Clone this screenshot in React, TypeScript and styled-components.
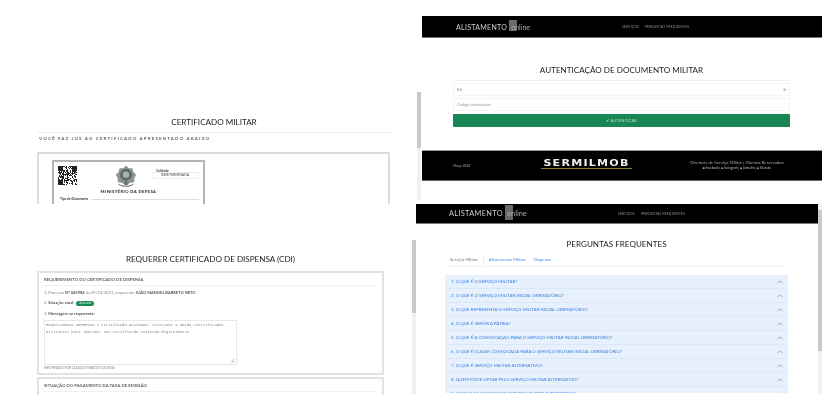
import React from 'react';
import styled, { createGlobalStyle } from 'styled-components';

const GlobalStyle = createGlobalStyle`
	html, body {
		margin: 0;
		padding: 0;
		background: #fff;
		font-family: 'Lato', 'Open Sans', sans-serif;
		overflow: hidden;
	}
`;

const Collage = styled.div`
	display: flex;
	width: 839px;
	height: 407px;
	overflow: hidden;
	background: #fff;
	filter: blur(0.55px);
`;

const LeftColumn = styled.div`
	display: flex;
	flex-direction: column;
	width: 416px;
	flex: none;
`;

const RightColumn = styled.div`
	display: flex;
	flex-direction: column;
	width: 406px;
	flex: none;
`;

const Title = styled.h1`
	margin: 0;
	text-align: center;
	font-size: 8.1px;
	line-height: 12px;
	font-weight: 400;
	color: #222;
`;

/* top left: certificate */
const CertificateShot = styled.section`
	height: 204px;
	padding: 116px 26px 0 37px;
	box-sizing: border-box;
	overflow: hidden;
`;

const CertHeader = styled.div`
	border-bottom: 1px solid #eee;
	padding-bottom: 4px;
	margin-right: -1px;
`;

const Lead = styled.p`
	margin: 3px 0 10px 2px;
	font-size: 4.5px;
	line-height: 6px;
	letter-spacing: 1.12px;
	font-weight: 700;
	color: #666;
`;

const CertCard = styled.div`
	height: 80px;
	width: 353px;
	box-sizing: border-box;
	border: 2px solid #dcdcdc;
	border-bottom: 0;
	padding: 6px 0 0 13px;
`;

const DocSheet = styled.div`
	width: 153px;
	height: 60px;
	box-sizing: border-box;
	border: 2px solid #b4b4b4;
	border-bottom: 0;
	padding: 4px 4px 0;
`;

const DocTop = styled.div`
	display: grid;
	grid-template-columns: 19px 1fr 46px;
	align-items: start;
	height: 22px;
`;

const Emblem = styled.svg`
	display: block;
	margin: -2px 0 0 38px;
`;

const ValidityBox = styled.div`
	margin: 3px 0 0 -1px;
	font-size: 3.4px;
	line-height: 4px;
	color: #444;
`;

const ValidityLabel = styled.div`
	font-weight: 700;
	padding-left: 4px;
	margin-bottom: -1px;
`;

const ValidityValue = styled.div`
	border: 1px solid #eee;
	padding: 0 2px 0 8px;
	height: 5px;
	white-space: nowrap;
`;

const Ministry = styled.div`
	text-align: center;
	font-size: 4.2px;
	line-height: 5px;
	font-weight: 900;
	letter-spacing: 0.4px;
	color: #333;
	margin-top: 1px;
	padding-left: 0;
`;

const DocField = styled.div`
	display: flex;
	align-items: center;
	gap: 3px;
	font-size: 3.2px;
	line-height: 4px;
	font-weight: 700;
	color: #333;
	margin: 3px 0 0 2px;

	&::after {
		content: '';
		flex: 1;
		border-top: 1px solid #ddd;
	}
`;

/* bottom left: dispensation */
const DispensaShot = styled.section`
	flex: 1;
	display: flex;
	min-height: 0;
`;

const DispensaBody = styled.div`
	width: 347px;
	margin-left: 37px;
	padding-top: 49px;
	overflow: hidden;
	height: 142px;
	flex: none;
`;

const Panel = styled.div`
	border: 2px solid #e2e2e2;
	border-radius: 1px;
	padding: 0 5px;
	margin-top: 6px;
	height: 104px;
	box-sizing: border-box;
`;

const PanelHeading = styled.div`
	height: 12px;
	display: flex;
	align-items: center;
	border-bottom: 1px solid #f0f0f0;
	font-size: 4.3px;
	font-weight: 700;
	color: #666;
	margin-bottom: 2px;
`;

const InfoLine = styled.div`
	font-size: 4px;
	line-height: 10.4px;
	color: #888;
	display: flex;
	align-items: center;
	gap: 2px;

	b {
		color: #555;
	}
`;

const StatusBadge = styled.span`
	background: #198754;
	color: #d7efe3;
	border-radius: 4px;
	font-size: 2.8px;
	line-height: 5px;
	padding: 0 3px;
`;

const MessageBox = styled.div`
	position: relative;
	width: 193px;
	height: 45px;
	box-sizing: border-box;
	border: 1px solid #e8e8e8;
	margin-top: 1px;
	padding: 1px 1px;
	font-family: 'Liberation Mono', monospace;
	font-size: 3.85px;
	line-height: 7px;
	color: #888;
`;

const ResizeGrip = styled.svg`
	position: absolute;
	right: 1px;
	bottom: 1px;
`;

const InformedBy = styled.div`
	font-size: 3.2px;
	line-height: 7px;
	color: #888;
`;

const ShortPanel = styled(Panel)`
	height: 30px;
	margin-top: 2px;
`;

const PageScroll = styled.div<{ $thumb: number; $top: number; $bottom: number }>`
	width: 4px;
	margin: ${({ $top, $bottom }) => `${$top}px 0 ${$bottom}px 1px`};
	background: linear-gradient(
		#c9c9c9 ${({ $thumb }) => $thumb}px,
		#f1f1f1 ${({ $thumb }) => $thumb}px
	);
	flex: none;
`;

const DispensaScroll = styled(PageScroll)`
	margin-left: 28px;
`;

/* right column */
const AuthShot = styled.section`
	display: flex;
	height: 204px;
`;

const AuthBody = styled.div`
	width: 400px;
	padding: 16px 0 0 1px;
	flex: none;
`;

const NavBar = styled.nav<{ $height: number; $pad: number; $gap: number }>`
	display: grid;
	grid-template-columns: ${({ $gap }) => $gap}px auto;
	align-items: center;
	height: ${({ $height }) => $height}px;
	box-sizing: border-box;
	background: #000;
	border-bottom: 1px solid #777;
	padding-left: ${({ $pad }) => $pad}px;
`;

const Brand = styled.div<{ $size: number }>`
	display: flex;
	align-items: center;
	color: #ccc;
	font-size: ${({ $size }) => $size}px;
	letter-spacing: 0.3px;
	white-space: nowrap;
`;

const BrandOnline = styled.span<{ $tall: number }>`
	position: relative;
	margin-left: 3px;
	padding-left: 1px;
	color: #aaa;
	letter-spacing: 0;

	&::before {
		content: '';
		position: absolute;
		left: -1px;
		top: 50%;
		width: 8px;
		height: ${({ $tall }) => $tall}px;
		margin-top: ${({ $tall }) => -$tall / 2 - 1}px;
		background: #6a6a6a;
		z-index: 0;
	}

	i {
		position: relative;
		font-style: normal;
	}
`;

const NavLinks = styled.div`
	display: flex;
	gap: 6px;
	font-size: 3.1px;
	letter-spacing: 0.3px;
	color: #999;
	white-space: nowrap;
`;

const AuthMain = styled.div`
	padding: 26px 32px 0 31px;
	height: 112px;
	box-sizing: border-box;
`;

const AuthTitle = styled(Title)`
	padding-bottom: 4px;
	border-bottom: 1px solid #f0f0f0;
	margin-bottom: 2px;
`;

const FieldRow = styled.div`
	display: flex;
	justify-content: space-between;
	align-items: center;
	height: 13px;
	box-sizing: border-box;
	padding: 0 3px;
	border: 1px solid #f4f4f4;
	border-radius: 1px;
	font-size: 3.8px;
	color: #999;
	margin-bottom: 2px;
`;

const AuthButton = styled.button`
	display: block;
	width: 100%;
	height: 13px;
	margin-top: 3px;
	padding: 0;
	border: 0;
	border-radius: 1px;
	background: #198754;
	color: #bfe0cf;
	font-family: inherit;
	font-size: 3.8px;
	letter-spacing: 0.3px;
	text-align: center;
`;

const Footer = styled.footer`
	display: grid;
	grid-template-columns: 88px 149px 1fr;
	align-items: center;
	height: 31px;
	box-sizing: border-box;
	background: #000;
	border-top: 1px solid #999;
	border-bottom: 1px solid #666;
	padding-left: 31px;
`;

const FooterNote = styled.div`
	font-size: 3.2px;
	color: #aaa;
`;

const LogoWord = styled.div`
	justify-self: start;
	width: 74px;
	margin-top: -3px;
	text-align: center;
	font-family: 'DejaVu Sans', sans-serif;
	font-weight: 700;
	font-size: 9px;
	line-height: 9px;
	letter-spacing: 1px;
	color: #f0f0ea;
	transform: scaleX(1.23);
	transform-origin: left center;
	border-bottom: 1.5px solid #8c7a1e;
`;

const FooterRights = styled.div`
	text-align: center;
	width: 94px;
	font-size: 4.4px;
	line-height: 6px;
	color: #aaa;
	white-space: nowrap;
`;

const FooterSocial = styled.div`
	font-size: 3.2px;
	line-height: 5px;
	color: #bbb;
`;

const FaqShot = styled.section`
	flex: 1;
	display: flex;
	min-height: 0;
	width: 406px;
`;

const FaqBody = styled.div`
	width: 402px;
	height: 189px;
	overflow: hidden;
	flex: none;
`;

const FaqMain = styled.div`
	padding: 14px 30px 0 29px;
`;

const TabRow = styled.div`
	display: flex;
	align-items: center;
	height: 13px;
	margin-top: 3px;
	border-bottom: 1px solid #f3f3f3;
	font-size: 4.4px;
	color: #3d7fd9;
`;

const Tab = styled.span<{ $active?: boolean }>`
	padding: 0 ${({ $active }) => ($active ? 5 : 0)}px;
	margin-right: ${({ $active }) => ($active ? 5 : 8)}px;
	color: ${({ $active }) => ($active ? '#777' : '#4a8ce0')};
	border-right: ${({ $active }) => ($active ? '1px solid #f0f0f0' : '0')};
	line-height: 10px;
`;

const Accordion = styled.div`
	margin-top: 8px;
`;

const AccordionRow = styled.div`
	display: flex;
	align-items: center;
	justify-content: space-between;
	height: 14px;
	box-sizing: border-box;
	padding: 0 5px 0 6px;
	background: #e7f1fd;
	border-bottom: 1px solid #dbe7f5;
	font-size: 4.4px;
	color: #3b7fd8;
	white-space: nowrap;
`;

const FaqScroll = styled.div`
	width: 4px;
	height: 189px;
	flex: none;
	background: linear-gradient(#f1f1f1 6px, #c9c9c9 6px, #c9c9c9 147px, #f1f1f1 147px);
`;

const qrBits = (size: number): boolean[] => {
	let seed = 7919;
	return Array.from({ length: size * size }, () => {
		seed = (seed * 137 + 59) % 1009;
		return seed % 2 === 0;
	});
};

const QrCode: React.FC = () => {
	const size = 19;
	const bits = qrBits(size);
	return (
		<svg width="19" height="19" viewBox="0 0 19 19">
			{bits.map((on, i) =>
				on ? <rect key={i} x={i % size} y={Math.floor(i / size)} width="1" height="1" fill="#222" /> : null
			)}
			<path d="M0 0h5v5H0zM14 0h5v5h-5zM0 14h5v5H0z" fill="#222" />
		</svg>
	);
};

const CoatOfArms: React.FC = () => (
	<Emblem width="22" height="24" viewBox="0 0 24 25">
		<path d="M12 1l3 3 4 0 1 4 3 3-2 4 0 4-5 1-4 3-4-3-5-1 0-4-2-4 3-3 1-4 4 0z" fill="#8d958e" />
		<circle cx="12" cy="11" r="6.5" fill="#5f6a63" />
		<circle cx="12" cy="11" r="3.5" fill="#a9b0aa" />
		<path d="M3 20c4 4 14 4 18 0l-1 2c-4 3-12 3-16 0z" fill="#77807a" />
		<path d="M11 16h2l1 6h-4z" fill="#69736c" />
	</Emblem>
);

const Chevron: React.FC = () => (
	<svg width="6" height="4" viewBox="0 0 6 4">
		<path d="M0.5 3L3 1l2.5 2" fill="none" stroke="#8a97a8" strokeWidth="0.7" />
	</svg>
);

const faqItems = [
	'1. O QUE É O SERVIÇO MILITAR?',
	'2. O QUE É O SERVIÇO MILITAR INICIAL OBRIGATÓRIO?',
	'3. O QUE REPRESENTA O SERVIÇO MILITAR INICIAL OBRIGATÓRIO?',
	'4. O QUE É SERVIR A PÁTRIA?',
	'5. O QUE É A CONVOCAÇÃO PARA O SERVIÇO MILITAR INICIAL OBRIGATÓRIO?',
	'6. O QUE É CLASSE CONVOCADA PARA O SERVIÇO MILITAR INICIAL OBRIGATÓRIO?',
	'7. O QUE É SERVIÇO MILITAR ALTERNATIVO?',
	'8. QUEM PODE OPTAR PELO SERVIÇO MILITAR ALTERNATIVO?',
	'9. QUAIS SÃO AS FASES DO SERVIÇO MILITAR ALTERNATIVO?'
];

const App: React.FC = () => (
	<>
		<GlobalStyle />
		<Collage>
			<LeftColumn>
				<CertificateShot>
					<CertHeader>
						<Title>CERTIFICADO MILITAR</Title>
					</CertHeader>
					<Lead>VOCÊ FAZ JUS AO CERTIFICADO APRESENTADO ABAIXO</Lead>
					<CertCard>
						<DocSheet>
							<DocTop>
								<QrCode />
								<CoatOfArms />
								<ValidityBox>
									<ValidityLabel>Validade</ValidityLabel>
									<ValidityValue>INDETERMINADA</ValidityValue>
								</ValidityBox>
							</DocTop>
							<Ministry>MINISTÉRIO DA DEFESA</Ministry>
							<DocField>Tipo de Documento</DocField>
						</DocSheet>
					</CertCard>
				</CertificateShot>
				<DispensaShot>
					<DispensaBody>
						<Title>REQUERER CERTIFICADO DE DISPENSA (CDI)</Title>
						<Panel>
							<PanelHeading>REQUERIMENTO DO CERTIFICADO DE DISPENSA</PanelHeading>
							<InfoLine>
								<span>
									1. Processo <b>Nº 045986</b> de 09/10/2021, requerente <b>JOÃO MANOEL BARRETO NETO</b>
								</span>
							</InfoLine>
							<InfoLine>
								<span>
									2. <b>Situação atual:</b>
								</span>
								<StatusBadge>Aprovado</StatusBadge>
							</InfoLine>
							<InfoLine>
								<span>
									3. <b>Mensagem ao requerente:</b>
								</span>
							</InfoLine>
							<MessageBox>
								Requerimento DEFERIDO e certificado ASSINADO. Selecione a opção &lt;Certificados
								Militares&gt; para imprimir seu certificado assinado digitalmente.
								<ResizeGrip width="5" height="5" viewBox="0 0 5 5">
									<path d="M1 4.5L4.5 1M3 4.5L4.5 3" stroke="#888" strokeWidth="0.6" />
								</ResizeGrip>
							</MessageBox>
							<InformedBy>INFORMADO POR CLAUDIO MARCOS DA SILVA</InformedBy>
						</Panel>
						<ShortPanel>
							<PanelHeading>SITUAÇÃO DO PAGAMENTO DA TAXA DE EMISSÃO</PanelHeading>
						</ShortPanel>
					</DispensaBody>
					<DispensaScroll $thumb={73} $top={36} $bottom={12} />
				</DispensaShot>
			</LeftColumn>
			<RightColumn>
				<AuthShot>
					<PageScroll $thumb={56} $top={92} $bottom={4} />
					<AuthBody>
						<NavBar $height={22} $pad={34} $gap={166}>
							<Brand $size={7}>
								ALISTAMENTO
								<BrandOnline $tall={11}>
									<i>online</i>
								</BrandOnline>
							</Brand>
							<NavLinks>
								<span>SERVIÇOS</span>
								<span>PERGUNTAS FREQUENTES</span>
							</NavLinks>
						</NavBar>
						<AuthMain>
							<AuthTitle>AUTENTICAÇÃO DE DOCUMENTO MILITAR</AuthTitle>
							<FieldRow>
								<span>RA</span>
								<span>⊞</span>
							</FieldRow>
							<FieldRow>
								<span>Código autenticador</span>
							</FieldRow>
							<AuthButton>✔ AUTENTICAR</AuthButton>
						</AuthMain>
						<Footer>
							<FooterNote>Março 2024</FooterNote>
							<LogoWord>SERMILMOB</LogoWord>
							<FooterRights>
								Diretoria de Serviço Militar | Direitos Reservados
								<FooterSocial>■ Facebook | ■ Instagram | ■ Linkedin | ■ Youtube</FooterSocial>
							</FooterRights>
						</Footer>
					</AuthBody>
				</AuthShot>
				<FaqShot>
					<FaqBody>
						<NavBar $height={20} $pad={33} $gap={169}>
							<Brand $size={7.4}>
								ALISTAMENTO
								<BrandOnline $tall={15}>
									<i>online</i>
								</BrandOnline>
							</Brand>
							<NavLinks>
								<span>SERVIÇOS</span>
								<span>PERGUNTAS FREQUENTES</span>
							</NavLinks>
						</NavBar>
						<FaqMain>
							<Title>PERGUNTAS FREQUENTES</Title>
							<TabRow>
								<Tab $active>Serviço Militar</Tab>
								<Tab>Alistamento Militar</Tab>
								<Tab>Dispensa</Tab>
							</TabRow>
							<Accordion>
								{faqItems.map((item) => (
									<AccordionRow key={item}>
										<span>{item}</span>
										<Chevron />
									</AccordionRow>
								))}
							</Accordion>
						</FaqMain>
					</FaqBody>
					<FaqScroll />
				</FaqShot>
			</RightColumn>
		</Collage>
	</>
);

export default App;
